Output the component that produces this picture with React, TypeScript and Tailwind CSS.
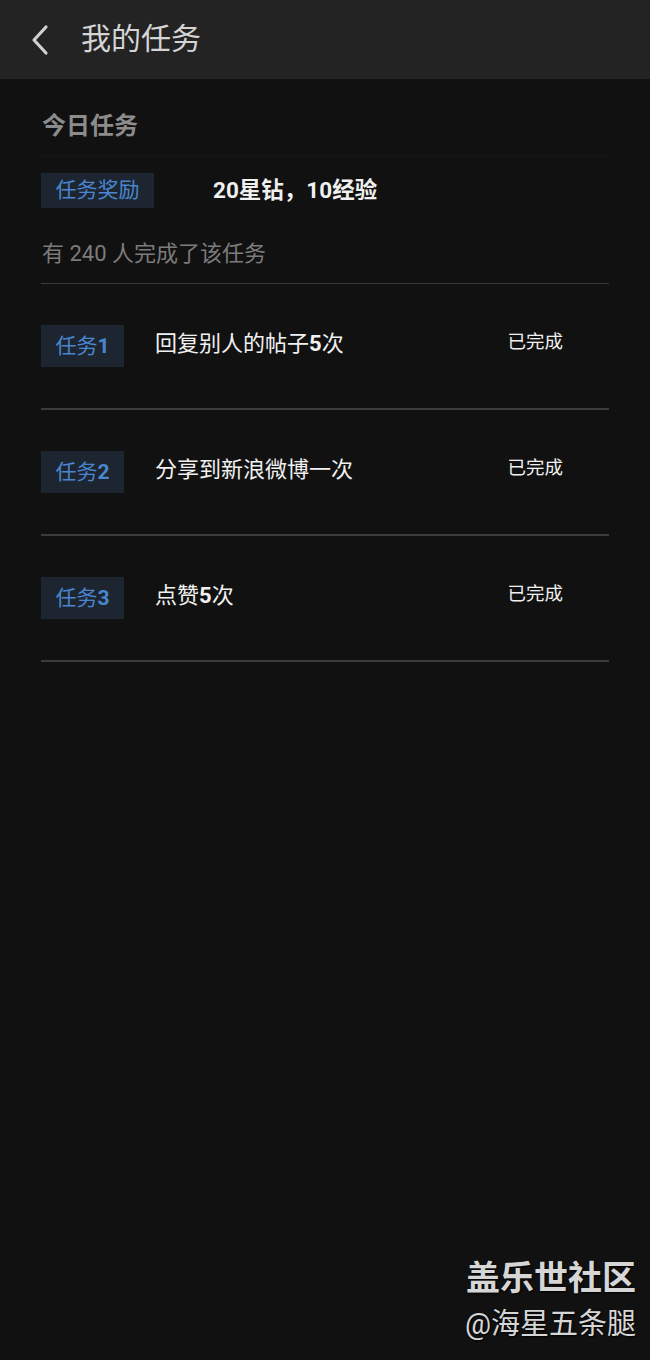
import React from "react";

const font = { fontFamily: 'Roboto, "Noto Sans CJK SC", "Noto Sans", sans-serif' };

function Row({ n, text }: { n: number; text: React.ReactNode }) {
  return (
    <div className="h-[126px] flex items-center border-b-2 border-[#3c3c3c]">
      <div className="flex items-center w-full">
        <div className="w-[83px] h-[42px] bg-[#1d2630] flex items-center justify-center text-[21px] text-[#4a86d0] leading-none">
          任务<span className="font-bold">{n}</span>
        </div>
        <div className="ml-[31px] text-[22px] text-[#f0f0f0] leading-none flex-1 -mt-[4px]">{text}</div>
        <div className="text-[18.5px] text-[#f0f0f0] leading-none mr-[46px] -mt-[8px]">已完成</div>
      </div>
    </div>
  );
}

export default function App() {
  return (
    <div className="w-[650px] h-[1360px] bg-[#111111] relative overflow-hidden" style={font}>
      <div className="h-[79px] bg-[#232323] flex items-center">
        <svg width="20" height="32" viewBox="0 0 20 32" className="ml-[29px]">
          <path d="M17 3 L5 16 L17 29" stroke="#d0d0d0" strokeWidth="3.2" fill="none" strokeLinecap="round" strokeLinejoin="round" />
        </svg>
        <div className="ml-[32px] text-[30px] text-[#d4d4d4] leading-none -mt-[2px]">我的任务</div>
      </div>
      <div className="mx-[41px]">
        <div className="pt-[35px] h-[77px] border-b border-[#161616] text-[24px] font-bold text-[#8c8c8c] leading-none pl-[1px]">今日任务</div>
        <div className="mt-[17px] flex items-center">
          <div className="w-[113px] h-[35px] bg-[#1d2630] flex items-center justify-center text-[21px] text-[#4a86d0] leading-none">任务奖励</div>
          <div className="ml-[59px] text-[22.5px] font-bold text-[#f0f0f0] leading-none -mt-[1px]">20星钻，10经验</div>
        </div>
        <div className="mt-[35px] pl-[1px] h-[41px] border-b border-[#3a3a3a] text-[22px] text-[#7c7c7c] leading-none">有 240 人完成了该任务</div>
        <Row n={1} text={<>回复别人的帖子<span className="font-bold">5</span>次</>} />
        <Row n={2} text={<>分享到新浪微博一次</>} />
        <Row n={3} text={<>点赞<span className="font-bold">5</span>次</>} />
      </div>
      <div className="absolute right-[14px] bottom-[21px] flex flex-col items-end text-[#d6d6d6]" style={{ textShadow: "1px 1px 2px #000" }}>
        <div className="text-[34px] font-bold leading-none">盖乐世社区</div>
        <div className="text-[29px] leading-none mt-[15px]">@海星五条腿</div>
      </div>
    </div>
  );
}
